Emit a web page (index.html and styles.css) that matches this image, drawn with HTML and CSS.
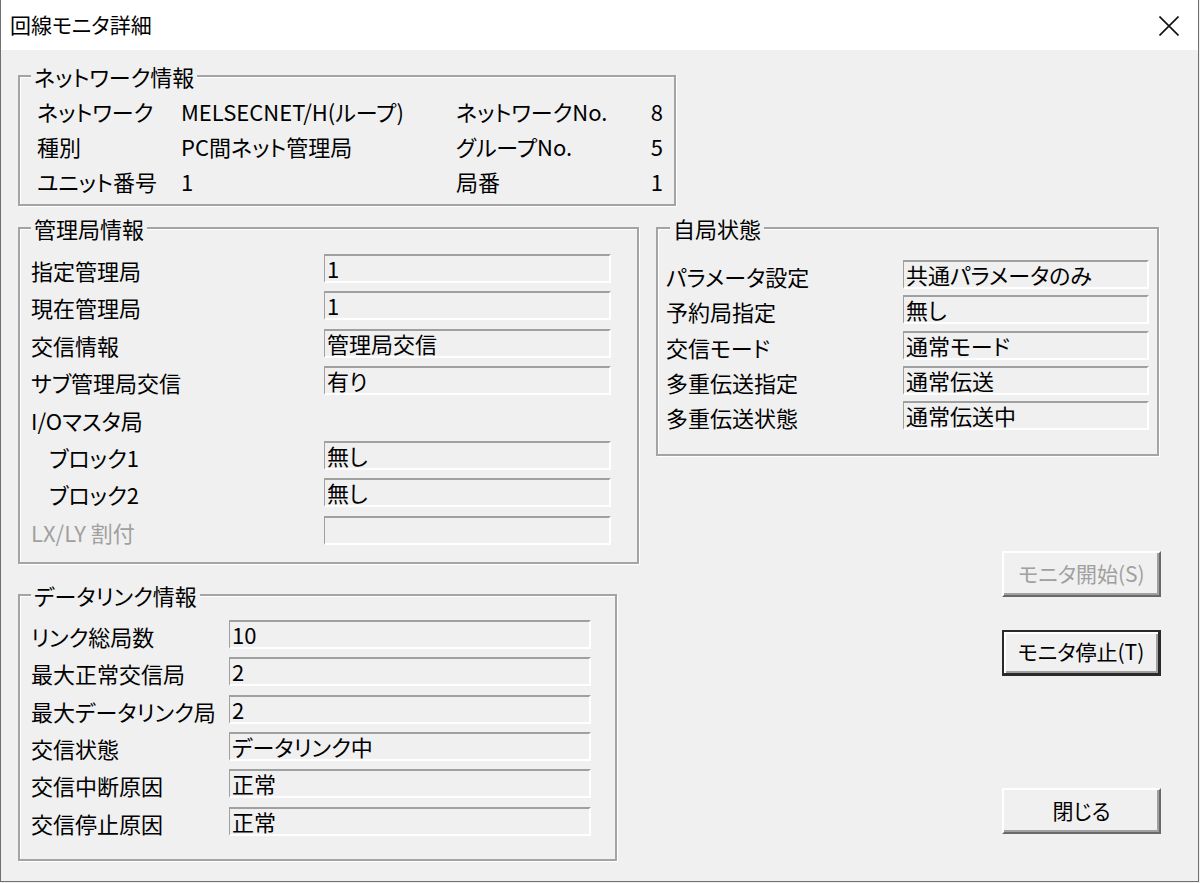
FILE: index.html
```html
<!DOCTYPE html>
<html lang="ja">
<head>
<meta charset="utf-8">
<title>回線モニタ詳細</title>
<link rel="stylesheet" href="styles.css">
</head>
<body>
<div class="window">
  <div class="titlebar">
    <span class="title">回線モニタ詳細</span>
    <svg class="close" width="20" height="20" viewBox="0 0 20 20" aria-label="閉じる">
      <path d="M0.5 0.5 L19.5 19.5 M19.5 0.5 L0.5 19.5" stroke="#111" stroke-width="1.6" fill="none"/>
    </svg>
  </div>
  <div class="client">
    <fieldset class="group net">
      <legend>ネットワーク情報</legend>
      <div class="net-grid">
        <span>ネットワーク</span><span>MELSECNET/H(ループ)</span><span>ネットワークNo.</span><span class="num">8</span>
        <span>種別</span><span>PC間ネット管理局</span><span>グループNo.</span><span class="num">5</span>
        <span>ユニット番号</span><span>1</span><span>局番</span><span class="num">1</span>
      </div>
    </fieldset>

    <div class="lower">
      <div class="col-left">
        <fieldset class="group mgr">
          <legend>管理局情報</legend>
          <div class="form mgr-grid">
            <span class="lbl">指定管理局</span><span class="field">1</span>
            <span class="lbl">現在管理局</span><span class="field">1</span>
            <span class="lbl">交信情報</span><span class="field">管理局交信</span>
            <span class="lbl">サブ管理局交信</span><span class="field">有り</span>
            <span class="lbl">I/Oマスタ局</span><span></span>
            <span class="lbl sub">ブロック1</span><span class="field">無し</span>
            <span class="lbl sub">ブロック2</span><span class="field">無し</span>
            <span class="lbl disabled">LX/LY 割付</span><span class="field"></span>
          </div>
        </fieldset>

        <fieldset class="group link">
          <legend>データリンク情報</legend>
          <div class="form link-grid">
            <span class="lbl">リンク総局数</span><span class="field">10</span>
            <span class="lbl">最大正常交信局</span><span class="field">2</span>
            <span class="lbl">最大データリンク局</span><span class="field">2</span>
            <span class="lbl">交信状態</span><span class="field">データリンク中</span>
            <span class="lbl">交信中断原因</span><span class="field">正常</span>
            <span class="lbl">交信停止原因</span><span class="field">正常</span>
          </div>
        </fieldset>
      </div>

      <div class="col-right">
        <fieldset class="group self">
          <legend>自局状態</legend>
          <div class="form self-grid">
            <span class="lbl">パラメータ設定</span><span class="field">共通パラメータのみ</span>
            <span class="lbl">予約局指定</span><span class="field">無し</span>
            <span class="lbl">交信モード</span><span class="field">通常モード</span>
            <span class="lbl">多重伝送指定</span><span class="field">通常伝送</span>
            <span class="lbl">多重伝送状態</span><span class="field">通常伝送中</span>
          </div>
        </fieldset>

        <div class="buttons">
          <button class="btn btn-start" disabled>モニタ開始(S)</button>
          <button class="btn btn-stop default">モニタ停止(T)</button>
          <button class="btn btn-close">閉じる</button>
        </div>
      </div>
    </div>
  </div>
</div>
</body>
</html>
```

FILE: styles.css
```css
html, body {
  margin: 0;
  padding: 0;
  background: #f0f0f0;
}

body {
  font-family: "Noto Sans CJK JP", "Noto Sans", sans-serif;
  font-size: 22px;
  line-height: 1;
  color: #000;
  font-feature-settings: "palt";
}

.window {
  width: 1199px;
  height: 882px;
  box-sizing: border-box;
  border-left: 1px solid #6f6f6f;
  border-right: 1px solid #6f6f6f;
  border-bottom: 1px solid #6f6f6f;
  background: #f0f0f0;
  display: flex;
  flex-direction: column;
}

.titlebar {
  height: 50px;
  flex: none;
  background: #fff;
  display: flex;
  align-items: center;
  justify-content: space-between;
  padding: 0 19px 0 9px;
}

.title {
  font-size: 21px;
  padding-bottom: 2px;
}

.close {
  display: block;
  margin-top: 1px;
}

.client {
  padding: 14px 0 0 17px;
  display: flex;
  flex-direction: column;
}

.group {
  margin: 0;
  border: 2px solid #a4a4a4;
  box-shadow: 1px 1px 0 #fff, inset 1px 1px 0 #fff;
  padding: 0;
  min-inline-size: 0;
  box-sizing: border-box;
}

.group legend {
  font-size: 22px;
  line-height: 24px;
  padding: 0 3px;
  background: #f0f0f0;
}

/* network group */
.net {
  width: 658px;
  padding: 5px 11px 6px 17px;
}

.net legend {
  margin-left: -6px;
}

.net-grid {
  display: grid;
  grid-template-columns: 144px 275px 1fr auto;
  grid-auto-rows: 35px;
  align-items: center;
}

.net-grid .num {
  text-align: right;
}

.lower {
  display: flex;
  gap: 17px;
  margin-top: 10px;
}

.col-left {
  display: flex;
  flex-direction: column;
  gap: 19px;
}

.col-right {
  display: flex;
  flex-direction: column;
  width: 503px;
}

.form {
  display: grid;
  align-items: center;
}

.mgr {
  width: 621px;
  padding: 14px 0 17px 11px;
}

.mgr legend,
.link legend {
  margin-left: 0;
}

.mgr-grid {
  grid-template-columns: 293px 287px;
  grid-auto-rows: 29px;
  row-gap: 8.4px;
}

.link {
  width: 599px;
  padding: 13px 0 23px 11px;
}

.link-grid {
  grid-template-columns: 198px 362px;
  grid-auto-rows: 29px;
  row-gap: 8.4px;
}

.self {
  width: 503px;
  padding: 20px 0 24px 8px;
}

.self legend {
  margin-left: 4px;
}

.self-grid {
  grid-template-columns: 237px 246px;
  grid-auto-rows: 29px;
  row-gap: 6.25px;
}

.lbl {
  white-space: nowrap;
  padding-top: 3px;
}

.lbl.sub {
  padding-left: 18px;
}

.lbl.disabled {
  color: #a0a0a0;
}

.field {
  box-sizing: border-box;
  height: 29px;
  border-top: 2px solid #a0a0a0;
  border-left: 1px solid #a0a0a0;
  border-bottom: 2px solid #fff;
  border-right: 2px solid #fff;
  padding: 0 0 0 2px;
  line-height: 25px;
  white-space: nowrap;
}

.buttons {
  display: flex;
  flex-direction: column;
  align-items: flex-end;
  margin-right: -2px;
}

.btn {
  font-family: inherit;
  font-feature-settings: "palt";
  font-size: 21px;
  line-height: 1;
  color: #000;
  width: 159px;
  height: 46px;
  box-sizing: border-box;
  background: #f0f0f0;
  border: 2px solid;
  border-color: #fff #696969 #696969 #fff;
  box-shadow: inset -2px -2px 0 #a0a0a0;
  padding: 0 0 2px 0;
  margin: 0;
}

.btn:disabled {
  color: #a0a0a0;
}

.btn.default {
  border: 2px solid #2a2a2a;
  border-width: 2px 3px 3px 2px;
  box-shadow: inset 2px 2px 0 #fff, inset -2px -2px 0 #a0a0a0;
}

.btn-start {
  margin-top: 95px;
}

.btn-stop {
  margin-top: 33px;
}

.btn-close {
  margin-top: 112px;
}
```
